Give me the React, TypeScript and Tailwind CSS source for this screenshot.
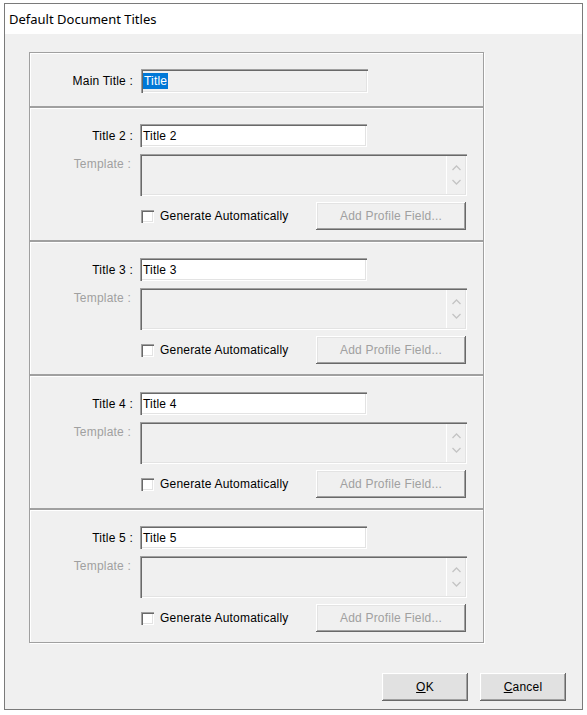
import React from 'react';

const sunken =
  'shadow-[inset_1px_1px_0_#a0a0a0,inset_2px_2px_0_#696969,inset_-1px_-1px_0_#ffffff,inset_-2px_-2px_0_#e3e3e3]';
const raised =
  'shadow-[inset_-1px_-1px_0_#696969,inset_1px_1px_0_#ffffff,inset_-2px_-2px_0_#a0a0a0,inset_2px_2px_0_#e3e3e3]';
const etched = 'border border-[#a0a0a0] shadow-[inset_1px_1px_0_#ffffff,1px_1px_0_#ffffff]';

function Chevron({ up }: { up?: boolean }) {
  return (
    <svg width="9" height="6" viewBox="0 0 9 6" className="block">
      <path
        d={up ? 'M0.5 5 L4.5 1 L8.5 5' : 'M0.5 1 L4.5 5 L8.5 1'}
        fill="none"
        stroke="#c4c4c4"
        strokeWidth="1.3"
      />
    </svg>
  );
}

function TitleGroup({ n }: { n: number }) {
  return (
    <div className={`relative h-[134px] ${etched} pt-[16px]`}>
      <div className="flex items-center">
        <div className="w-[103px] text-right text-black">Title {n} :</div>
        <div className={`ml-[7px] h-[23px] w-[227px] bg-white ${sunken} flex items-center pl-[3px] text-black`}>
          Title {n}
        </div>
      </div>

      <div className="mt-[7px] flex items-start">
        <div className="w-[101px] pt-[3px] text-right text-[#a0a0a0]">Template :</div>
        <div className={`ml-[9px] flex h-[42px] w-[327px] bg-[#f0f0f0] ${sunken}`}>
          <div className="flex-1" />
          <div className="my-[2px] mr-[2px] flex w-[19px] flex-col items-center justify-between border-l border-white py-[9px]">
            <Chevron up />
            <Chevron />
          </div>
        </div>
      </div>

      <div className="mt-[6px] flex items-center">
        <div className="ml-[111px] flex items-center">
          <div className={`h-[13px] w-[13px] bg-white ${sunken}`} />
          <span className="ml-[6px] text-black">Generate Automatically</span>
        </div>
        <div
          className={`ml-auto mr-[17px] flex h-[28px] w-[150px] items-center justify-center bg-[#f0f0f0] ${raised} text-[#a0a0a0]`}
        >
          Add Profile Field...
        </div>
      </div>
    </div>
  );
}

export default function App() {
  return (
    <div
      className="h-[715px] w-[587px] overflow-hidden bg-white pl-[4px] pt-[3px] text-[12px] leading-[14px] tracking-[0.2px]"
      style={{ fontFamily: '"Liberation Sans", Arial, sans-serif' }}
    >
      <div className="flex h-[707px] w-[579px] flex-col border border-[#7a7a7a]">
        <div
          className="flex h-[30px] items-center bg-white pl-[4px] text-[13px] tracking-normal text-black"
          style={{ fontFamily: '"Noto Sans", "Open Sans", sans-serif' }}
        >
          Default Document Titles
        </div>

        <div className="flex flex-1 flex-col bg-[#f0f0f0] pl-[24px] pt-[18px]">
          <div className="w-[455px]">
            <div className={`h-[55px] ${etched} pt-[16px]`}>
              <div className="flex items-center">
                <div className="w-[103px] text-right text-black">Main Title :</div>
                <div
                  className={`ml-[8px] flex h-[24px] w-[227px] items-center bg-[#f0f0f0] ${sunken} pl-[2px]`}
                >
                  <span className="bg-[#0078d7] px-[1px] py-[1px] text-white">Title</span>
                </div>
              </div>
            </div>
            <TitleGroup n={2} />
            <TitleGroup n={3} />
            <TitleGroup n={4} />
            <TitleGroup n={5} />
          </div>

          <div className="mt-[30px] flex justify-end gap-[12px] pr-[16px]">
            <div className={`flex h-[28px] w-[86px] items-center justify-center bg-[#e1e1e1] ${raised} text-black`}>
              <span>
                <span className="underline">O</span>K
              </span>
            </div>
            <div className={`flex h-[28px] w-[86px] items-center justify-center bg-[#e1e1e1] ${raised} text-black`}>
              <span>
                <span className="underline">C</span>ancel
              </span>
            </div>
          </div>
        </div>
      </div>
    </div>
  );
}
